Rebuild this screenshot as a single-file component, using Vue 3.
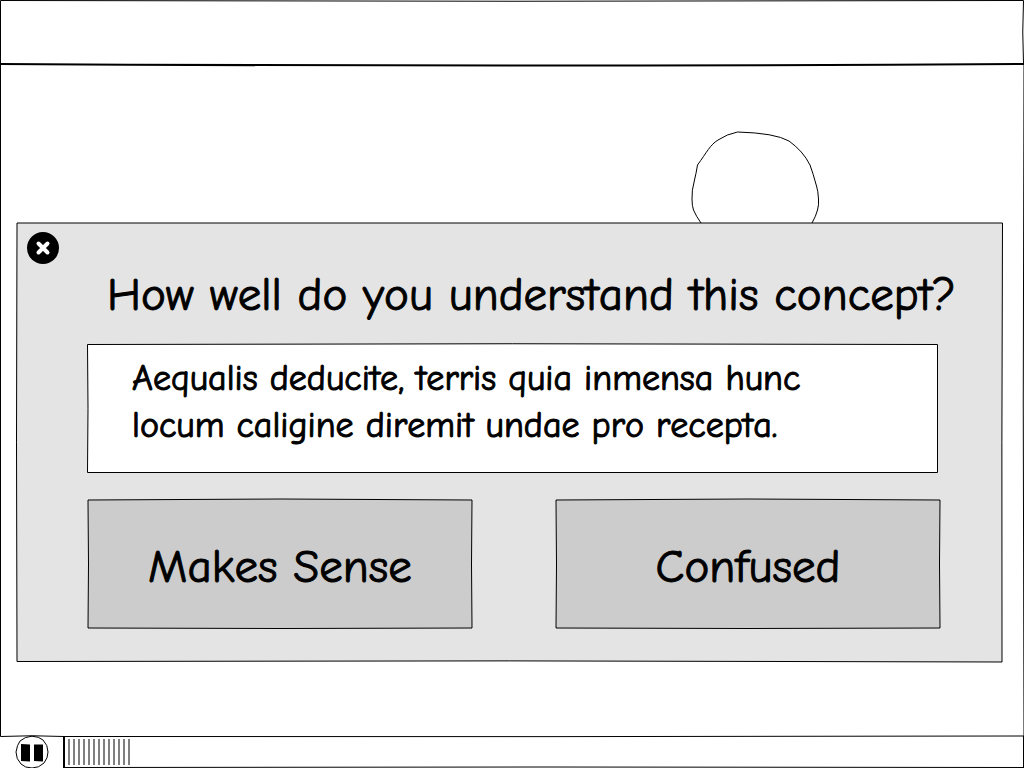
<script setup>
import { ref } from 'vue'

const open = ref(true)
const playing = ref(true)
const segments = 13
</script>

<template>
  <div class="page">
    <header class="bar">
      <svg class="outline" viewBox="0 0 1024 65" preserveAspectRatio="none" aria-hidden="true">
        <path d="M.5 .5Q512 2 1023.5 .5Q1022 32 1023.5 63.5" />
        <path d="M.5 .5V64" />
        <path class="thick" d="M0 64Q512 67 1024 64" />
      </svg>
    </header>

    <main class="stage">
      <svg class="outline" viewBox="0 0 1024 671" preserveAspectRatio="none" aria-hidden="true">
        <path d="M.5 0V671.5Q32 670 64 671.5" />
        <path d="M1024 0Q1022.5 336 1024 672" />
      </svg>
      <svg class="shape" viewBox="0 0 130 132" aria-hidden="true">
        <path d="M46.500 2Q36 4 27 10C19 15 16 22 6.500 35Q5 44 3.500 50Q.5 61 1 69Q1 76 2.500 80Q5 86 10 93C24 115 40 124 62 127C86 126 104 115 121 93Q125 86 126.500 80Q128 75 127.500 69Q127 60 125.500 56Q122 43 119 35Q112 21 98 11Q84 3 46.500 2Z" />
      </svg>
    </main>

    <footer class="player">
      <button class="pause" type="button" aria-label="Pause" :aria-pressed="playing" @click="playing = !playing">
        <svg viewBox="0 0 34 34" aria-hidden="true">
          <path class="ring" d="M17 1.200Q24 1.500 28 5Q33 10 33 17Q33 23 29 28Q24 33 17 33Q10 33 6 29Q1 24 1 17Q2 10 5 6Q10 1.500 17 1.200Z" />
          <path d="M6 9L15 9.500V26.500L6 26ZM19 9.500H28V26.500L19 26Z" />
        </svg>
      </button>
      <div class="track" role="progressbar" aria-label="Playback" aria-valuemin="0" aria-valuemax="100" aria-valuenow="7">
        <svg class="outline" viewBox="0 0 960 32" preserveAspectRatio="none" aria-hidden="true">
          <path d="M0 .5Q480 1 960 0M0 31.500Q480 30.500 960 31.500M959.500 0V31" />
          <path class="thick" d="M0 .5V32" />
        </svg>
        <span v-for="n in segments" :key="n" class="segment"></span>
      </div>
    </footer>

    <section v-if="open" class="dialog" role="dialog" aria-labelledby="question">
      <svg class="outline" viewBox="0 0 986 440" preserveAspectRatio="none" aria-hidden="true">
        <path class="panel" d="M1 1H986.500Q985.500 220 986 440Q493 438 1 439.500Q0 220 1 1Z" />
      </svg>
      <button class="close" type="button" aria-label="Close" @click="open = false">
        <svg viewBox="0 0 32 32" aria-hidden="true">
          <circle cx="16" cy="16" r="16" />
          <path d="M11.500 11.500L20.500 20.500M20.500 11.500L11.500 20.500" />
        </svg>
      </button>
      <h1 id="question">How well do you understand this concept?</h1>
      <div class="concept">
        <svg class="outline" viewBox="0 0 851 129" preserveAspectRatio="none" aria-hidden="true">
          <path class="paper" d="M.5 .5Q425 -1 850.500 .5V128.500H.5Q1.500 64 .5 .5Z" />
        </svg>
        <p>Aequalis deducite, terris quia inmensa hunc<br>locum caligine diremit undae pro recepta.</p>
      </div>
      <div class="answers">
        <button v-for="label in ['Makes Sense', 'Confused']" :key="label" class="answer" type="button">
          <svg class="outline" viewBox="0 0 386 130" preserveAspectRatio="none" aria-hidden="true">
            <path class="choice" d="M1 1Q193 -1 385 1Q384 65 385 129Q193 130 1 129Q2 65 1 1Z" />
          </svg>
          <span>{{ label }}</span>
        </button>
      </div>
    </section>
  </div>
</template>

<style>
body {
  margin: 0;
  background: #fff;
}
</style>

<style scoped>
.page {
  position: relative;
  display: flex;
  flex-direction: column;
  min-height: 100vh;
  overflow: hidden;
  color: #000;
  font-family: "Comic Sans MS", "Comic Neue", "Open Sans", sans-serif;
  font-kerning: none;
}

button {
  padding: 0;
  border: 0;
  background: none;
  color: inherit;
  font: inherit;
  font-kerning: none;
  cursor: pointer;
}

.outline {
  position: absolute;
  inset: 0;
  width: 100%;
  height: 100%;
  overflow: visible;
}

.outline path {
  fill: none;
  stroke: #000;
  stroke-width: 1;
  vector-effect: non-scaling-stroke;
}

.outline .thick {
  stroke-width: 2;
}

.outline .panel {
  fill: #e4e4e4;
}

.outline .paper {
  fill: #fff;
}

.outline .choice {
  fill: #ccc;
}

.bar {
  position: relative;
  height: 65px;
}

.stage {
  position: relative;
  flex: 1;
}

.shape {
  display: block;
  width: 130px;
  margin: 65px 0 0 67.5%;
  fill: none;
  stroke: #000;
}

.player {
  display: flex;
  height: 32px;
}

.pause {
  width: 34px;
  height: 34px;
  margin: -1px 14px 0 15px;
}

.pause svg,
.close svg {
  display: block;
}

.pause .ring {
  fill: #fff;
  stroke: #000;
}

.track {
  position: relative;
  flex: 1;
  display: flex;
  gap: 3px;
  padding: 3px 0 3px 4px;
  margin-left: 1px;
}

.segment {
  width: 2px;
  background: #808080;
}

.dialog {
  position: absolute;
  top: 222px;
  left: 16px;
  right: 22px;
  box-sizing: border-box;
  padding: 33px 61px 33px 71px;
}

.close {
  position: absolute;
  top: 10px;
  left: 11px;
  width: 32px;
  height: 32px;
}

.close path {
  fill: none;
  stroke: #fff;
  stroke-width: 4;
  stroke-linecap: round;
}

h1 {
  position: relative;
  margin: 0 0 9px 20px;
  font-size: 47px;
  font-weight: 400;
  line-height: 80px;
  white-space: nowrap;
  -webkit-text-stroke: 1px #000;
}

.concept {
  position: relative;
  min-height: 129px;
  margin-right: 3px;
  box-sizing: border-box;
  padding: 11px 20px 10px 45px;
}

.concept p {
  position: relative;
  margin: 0;
  font-size: 36px;
  line-height: 47px;
  -webkit-text-stroke: 1px #000;
}

.answers {
  display: grid;
  grid-template-columns: 1fr 1fr;
  gap: 82px;
  margin-top: 26px;
}

.answer {
  position: relative;
  height: 130px;
  padding-top: 6px;
  font-size: 47px;
  -webkit-text-stroke: 1px #000;
}

.answer span {
  position: relative;
}
</style>
